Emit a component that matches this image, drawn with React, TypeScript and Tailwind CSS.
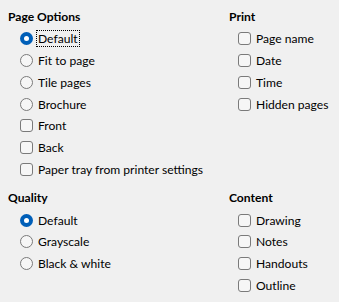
import React from "react";

const Radio = ({ checked }: { checked?: boolean }) =>
  checked ? (
    <span className="flex h-[13px] w-[13px] shrink-0 items-center justify-center rounded-full bg-[#005fb8]">
      <span className="h-[5px] w-[5px] rounded-full bg-white" />
    </span>
  ) : (
    <span className="h-[13px] w-[13px] shrink-0 rounded-full border border-[#7a7a7a] bg-[#f6f6f6]" />
  );

const Check = () => (
  <span className="h-[13px] w-[13px] shrink-0 rounded-[3px] border border-[#7a7a7a] bg-[#f6f6f6]" />
);

const Row = ({
  kind,
  label,
  checked,
  focus,
}: {
  kind: "radio" | "check";
  label: string;
  checked?: boolean;
  focus?: boolean;
}) => (
  <div className="flex h-[21.8px] items-center gap-[3px] whitespace-nowrap">
    {kind === "radio" ? <Radio checked={checked} /> : <Check />}
    <span
      className={
        focus
          ? "border border-dotted border-black px-[1px] leading-[15px]"
          : "px-[2px] leading-[15px]"
      }
    >
      {label}
    </span>
  </div>
);

const Heading = ({ children }: { children: React.ReactNode }) => (
  <div className="flex h-[21.8px] items-center font-bold">{children}</div>
);

const App = () => {
  return (
    <div
      className="h-[302px] w-[339px] bg-[#f0f0f0] text-[12.1px] text-black"
      style={{ fontFamily: 'Lato, "Noto Sans", sans-serif' }}
    >
      <div className="grid grid-cols-[221px_1fr] px-[8px] pt-[6px]">
        <div>
          <Heading>Page Options</Heading>
          <div className="pl-[12px]">
            <Row kind="radio" label="Default" checked focus />
            <Row kind="radio" label="Fit to page" />
            <Row kind="radio" label="Tile pages" />
            <Row kind="radio" label="Brochure" />
            <Row kind="check" label="Front" />
            <Row kind="check" label="Back" />
            <Row kind="check" label="Paper tray from printer settings" />
          </div>
        </div>
        <div>
          <Heading>Print</Heading>
          <div className="pl-[9px]">
            <Row kind="check" label="Page name" />
            <Row kind="check" label="Date" />
            <Row kind="check" label="Time" />
            <Row kind="check" label="Hidden pages" />
          </div>
        </div>
      </div>
      <div className="mt-[7px] grid grid-cols-[221px_1fr] px-[8px]">
        <div>
          <Heading>Quality</Heading>
          <div className="pl-[12px]">
            <Row kind="radio" label="Default" checked />
            <Row kind="radio" label="Grayscale" />
            <Row kind="radio" label="Black & white" />
          </div>
        </div>
        <div>
          <Heading>Content</Heading>
          <div className="pl-[9px]">
            <Row kind="check" label="Drawing" />
            <Row kind="check" label="Notes" />
            <Row kind="check" label="Handouts" />
            <Row kind="check" label="Outline" />
          </div>
        </div>
      </div>
    </div>
  );
};

export default App;
